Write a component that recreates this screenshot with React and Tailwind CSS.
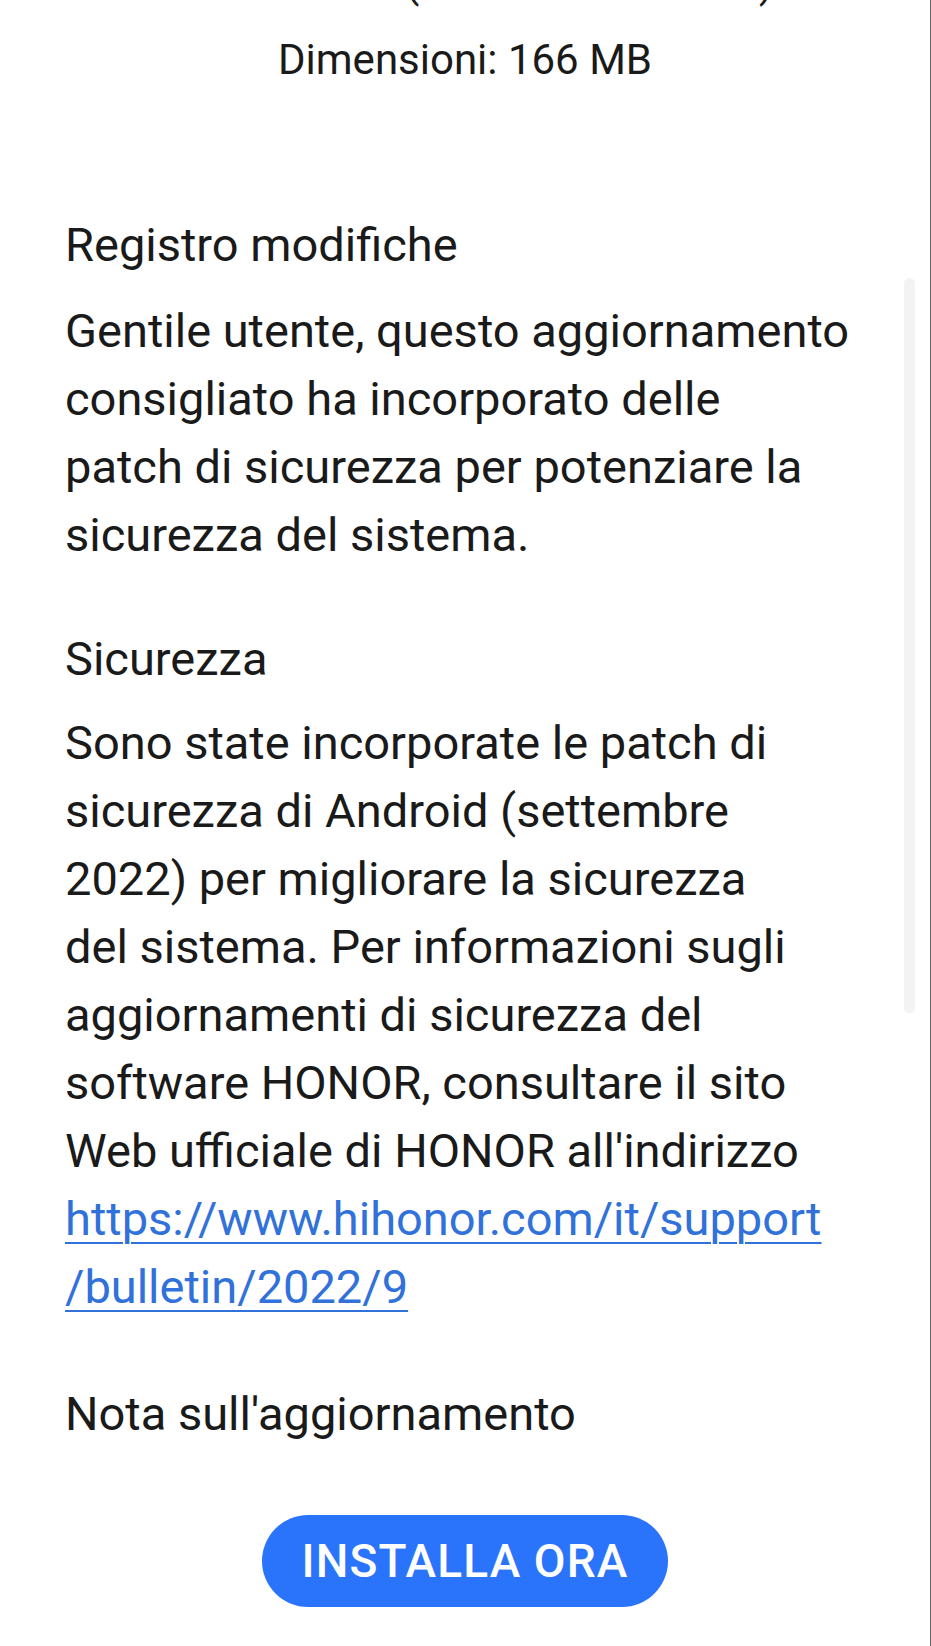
import React from 'react';

const intro = [
  'Gentile utente, questo aggiornamento',
  'consigliato ha incorporato delle',
  'patch di sicurezza per potenziare la',
  'sicurezza del sistema.',
];

const security = [
  'Sono state incorporate le patch di',
  'sicurezza di Android (settembre',
  '2022) per migliorare la sicurezza',
  'del sistema. Per informazioni sugli',
  'aggiornamenti di sicurezza del',
  'software HONOR, consultare il sito',
  "Web ufficiale di HONOR all'indirizzo",
];

const Lines = ({ lines }) => (
  <div>
    {lines.map((line) => (
      <p key={line} className="whitespace-nowrap">{line}</p>
    ))}
  </div>
);

export default function App() {
  return (
    <div
      className="relative min-h-[1646px] bg-white text-[47px] leading-[68px] text-[#1a1a1a] border-r border-[#666666] overflow-hidden"
      style={{ fontFamily: 'Roboto, "Noto Sans", sans-serif' }}
    >
      {/* version line, cut off at the top */}
      <div className="h-[17px] overflow-hidden flex flex-col justify-end">
        <p className="shrink-0 text-center text-[42px] whitespace-nowrap">v. 17.0.0.138 (C431E10R12P137)</p>
      </div>
      <p className="mt-[9px] text-center text-[42px]">Dimensioni: 166 MB</p>

      <div className="pl-[65px] pt-[117px]">
        <h2>Registro modifiche</h2>
        <div className="mt-[18px]">
          <Lines lines={intro} />
        </div>

        <h2 className="mt-[56px]">Sicurezza</h2>
        <div className="mt-[16px]">
          <Lines lines={security} />
          <a href="#" className="block text-[#3171da] underline underline-offset-[7px] decoration-2">
            https://www.hihonor.com/it/support
            <br />
            /bulletin/2022/9
          </a>
        </div>

        <p className="mt-[59px]">Nota sull'aggiornamento</p>
      </div>

      <div className="flex justify-center pt-[67px] pb-[39px]">
        <button className="w-[406px] h-[92px] rounded-full bg-[#2a74fb] text-white text-[46px] font-medium tracking-wide">
          INSTALLA ORA
        </button>
      </div>

      {/* scrollbar */}
      <div className="absolute left-[904px] top-[278px] w-[11px] h-[735px] rounded-full bg-[#f3f3f3]" />
    </div>
  );
}
